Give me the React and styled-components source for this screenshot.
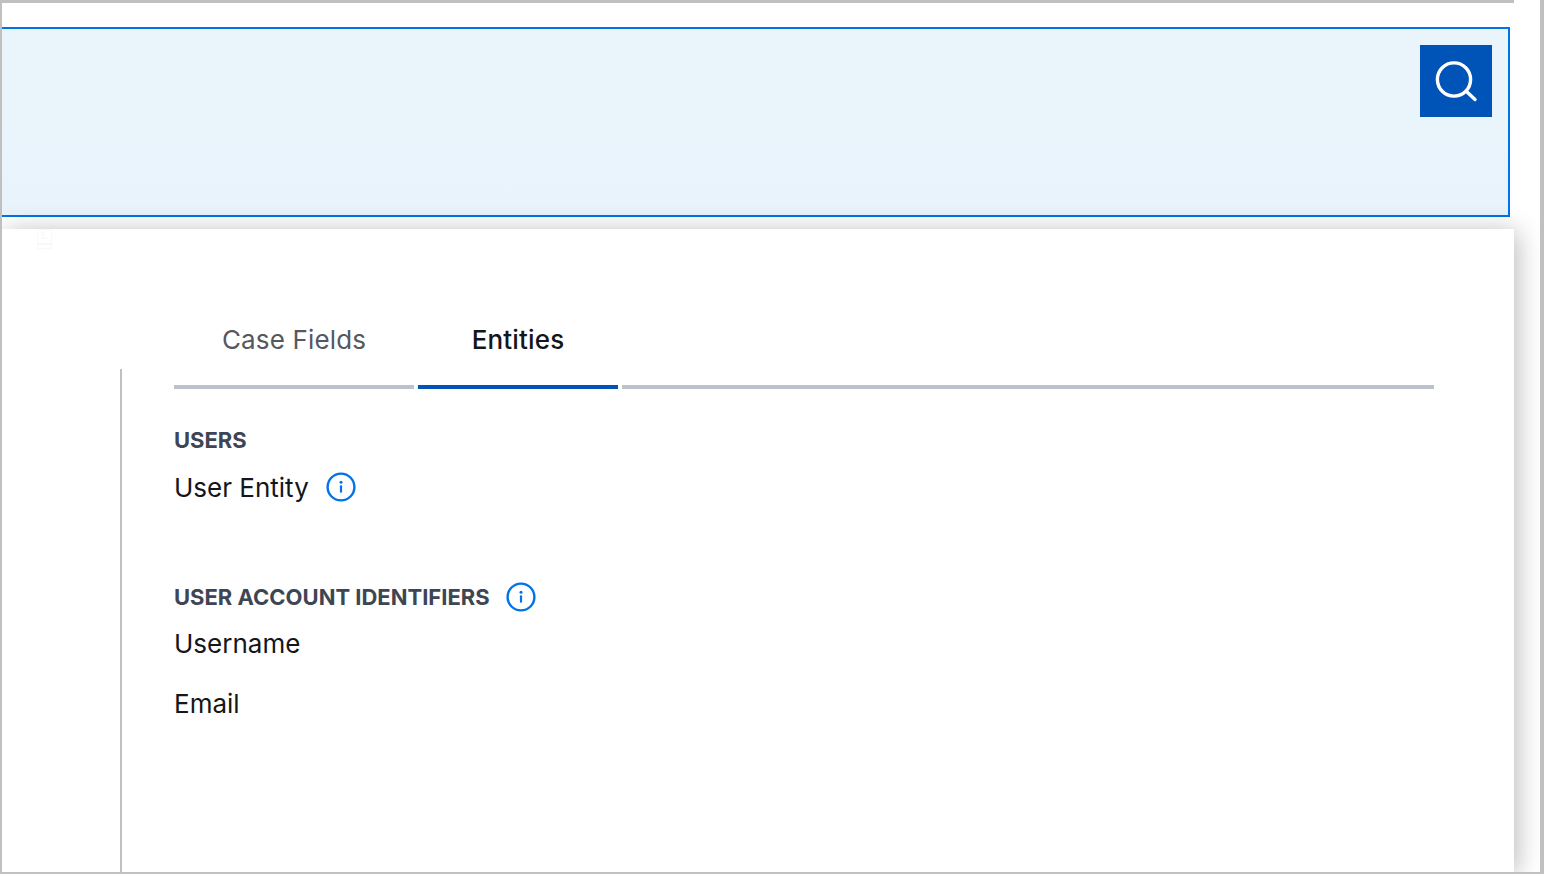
import styled, { createGlobalStyle } from "styled-components";

const GlobalStyle = createGlobalStyle`
  html, body {
    margin: 0;
    padding: 0;
    background: #fff;
    overflow: hidden;
  }
  * {
    box-sizing: border-box;
  }
`;

const InfoIcon = () => (
  <InfoSvg viewBox="0 0 30 30" fill="none">
    <circle cx="15" cy="15" r="13.4" stroke="#0073e6" strokeWidth="2.4" />
    <circle cx="15" cy="10.2" r="1.5" fill="#0073e6" />
    <rect x="13.9" y="13.2" width="2.2" height="7.6" rx="1" fill="#0073e6" />
  </InfoSvg>
);

const App = () => (
  <Frame>
    <GlobalStyle />
    <SearchPanel>
      <SearchButton type="button" aria-label="Search">
        <svg width="44" height="44" viewBox="0 0 44 44" fill="none" stroke="#fff" strokeWidth="3.4" strokeLinecap="round">
          <circle cx="20" cy="20.5" r="16.6" />
          <path d="M33 33 L41 40.5" />
        </svg>
      </SearchButton>
    </SearchPanel>
    <Card>
      <GhostThumb viewBox="0 0 15 20" fill="none">
        <rect x="0.5" y="0.5" width="14" height="19" stroke="#f9f9fb" />
        <path d="M4 3h3M4 6h4M4 9h6" stroke="#f4f5f7" />
        <path d="M0.5 15h14" stroke="#eff0fa" />
      </GhostThumb>
      <Tabs>
        <Tab $width={240}>Case Fields</Tab>
        <Tab $width={200} $active>Entities</Tab>
        <TabFill />
      </Tabs>
      <Body>
        <Section>
          <Heading>USERS</Heading>
          <Item $top={16}>
            User Entity
            <InfoIcon />
          </Item>
        </Section>
        <Section $second>
          <Heading>
            USER ACCOUNT IDENTIFIERS
            <InfoIcon />
          </Heading>
          <Item $top={15}>Username</Item>
          <Item $top={26}>Email</Item>
        </Section>
      </Body>
    </Card>
  </Frame>
);

export default App;

const Frame = styled.div`
  position: relative;
  width: 1544px;
  height: 874px;
  padding: 27px 30px 0 0;
  overflow: hidden;
  background: #fff;
  font-family: Inter, "Liberation Sans", sans-serif;
  border-left: 2px solid #c0c0c0;
  border-right: 4px solid #c0c0c0;
  border-bottom: 2px solid #c0c0c0;

  &::before {
    content: "";
    position: absolute;
    top: 0;
    left: -2px;
    width: 1514px;
    height: 3px;
    background: #c0c0c0;
  }
`;

const SearchPanel = styled.div`
  display: flex;
  justify-content: flex-end;
  align-items: flex-start;
  height: 190px;
  padding: 16px 16px 0 0;
  background: linear-gradient(#eaf5fb, #e9f3fb);
  border: 2px solid #0073e6;
  border-left: none;
`;

const SearchButton = styled.button`
  display: flex;
  align-items: center;
  justify-content: center;
  width: 72px;
  height: 72px;
  padding: 0;
  border: none;
  background: #0054b8;
`;

const Card = styled.div`
  position: relative;
  width: 1512px;
  height: 643px;
  margin-top: 12px;
  padding: 80px 80px 0 172px;
  background: #fff;
  box-shadow: 4px 2px 24px rgba(0, 0, 0, 0.26);
`;

const GhostThumb = styled.svg`
  position: absolute;
  top: 0;
  left: 35px;
  width: 15px;
  height: 20px;
`;

const Tabs = styled.div`
  display: flex;
  gap: 4px;
  height: 80px;
`;

const Tab = styled.div`
  width: ${(p) => p.$width}px;
  display: flex;
  align-items: center;
  justify-content: center;
  padding-bottom: 16px;
  font-size: 26px;
  font-weight: ${(p) => (p.$active ? 450 : 400)};
  letter-spacing: 0.15px;
  color: ${(p) => (p.$active ? "#14161a" : "#55585f")};
  border-bottom: 4px solid ${(p) => (p.$active ? "#0054b8" : "#bcc2ce")};
`;

const TabFill = styled.div`
  flex: 1;
  border-bottom: 4px solid #bcc2ce;
`;

const Body = styled.div`
  position: relative;
  padding-top: 36px;

  &::before {
    content: "";
    position: absolute;
    top: -20px;
    bottom: -300px;
    left: -54px;
    width: 2px;
    background: #c0c0c0;
  }
`;

const Section = styled.div`
  margin-top: ${(p) => (p.$second ? "78px" : "0")};
`;

const Heading = styled.div`
  display: flex;
  align-items: center;
  gap: 16px;
  height: 29px;
  font-size: 22px;
  font-weight: 650;
  color: #3e4553;
`;

const Item = styled.div`
  display: flex;
  align-items: center;
  gap: 17px;
  height: 34px;
  margin-top: ${(p) => p.$top}px;
  font-size: 26px;
  color: #14161a;
`;

const InfoSvg = styled.svg`
  width: 30px;
  height: 30px;
`;
